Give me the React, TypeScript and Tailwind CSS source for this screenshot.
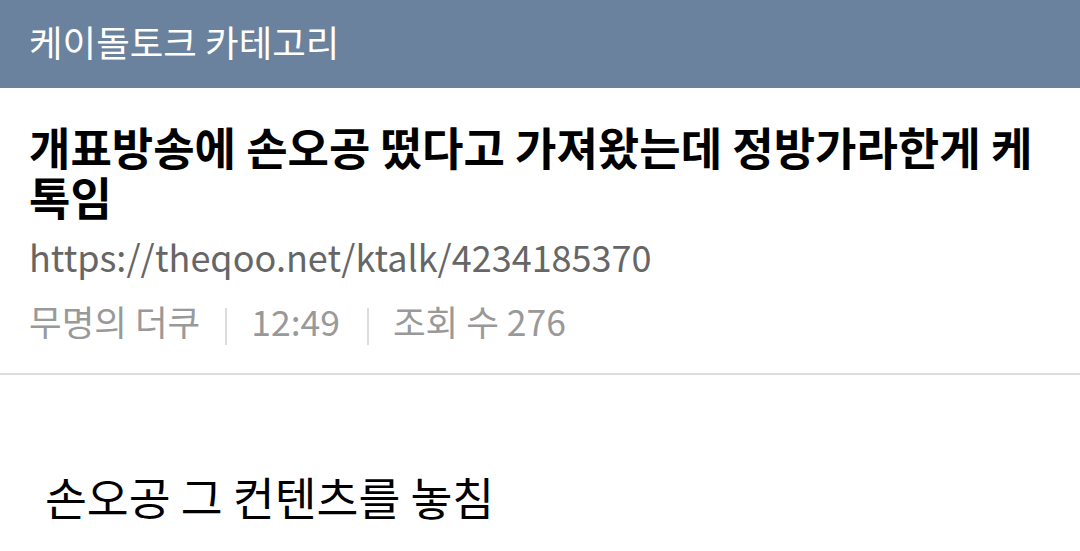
import React from "react";

const kr = { fontFamily: '"Noto Sans CJK KR", "Noto Sans", sans-serif' };

export default function App() {
  return (
    <div className="w-[1080px] h-[551px] bg-white overflow-hidden" style={kr}>
      <div className="h-[88px] bg-[#6b829e] flex items-center pl-[29px] pb-[4px]">
        <span className="text-white text-[36.5px] leading-none">케이돌토크 카테고리</span>
      </div>
      <div className="pl-[29px] pr-[30px] pt-[34px] border-b-2 border-[#dddddd] pb-[28px]">
        <h1 className="text-[45px] font-bold leading-[50px] text-black">
          개표방송에 손오공 떴다고 가져왔는데 정방가라한게 케톡임
        </h1>
        <div className="mt-[10px] text-[36px] leading-[48px] text-[#666666]">https://theqoo.net/ktalk/4234185370</div>
        <div className="mt-[16px] flex items-center text-[35.5px] leading-[48px] text-[#999999]">
          <span>무명의 더쿠</span>
          <span className="ml-[25px] mr-[24px] mt-[12px] w-[2px] h-[37px] bg-[#dddddd]" />
          <span>12:49</span>
          <span className="ml-[27px] mr-[24px] mt-[12px] w-[2px] h-[37px] bg-[#dddddd]" />
          <span>조회 수 276</span>
        </div>
      </div>
      <div className="pl-[45px] pt-[91px] text-[45.5px] text-black leading-[60px]">손오공 그 컨텐츠를 놓침</div>
    </div>
  );
}
